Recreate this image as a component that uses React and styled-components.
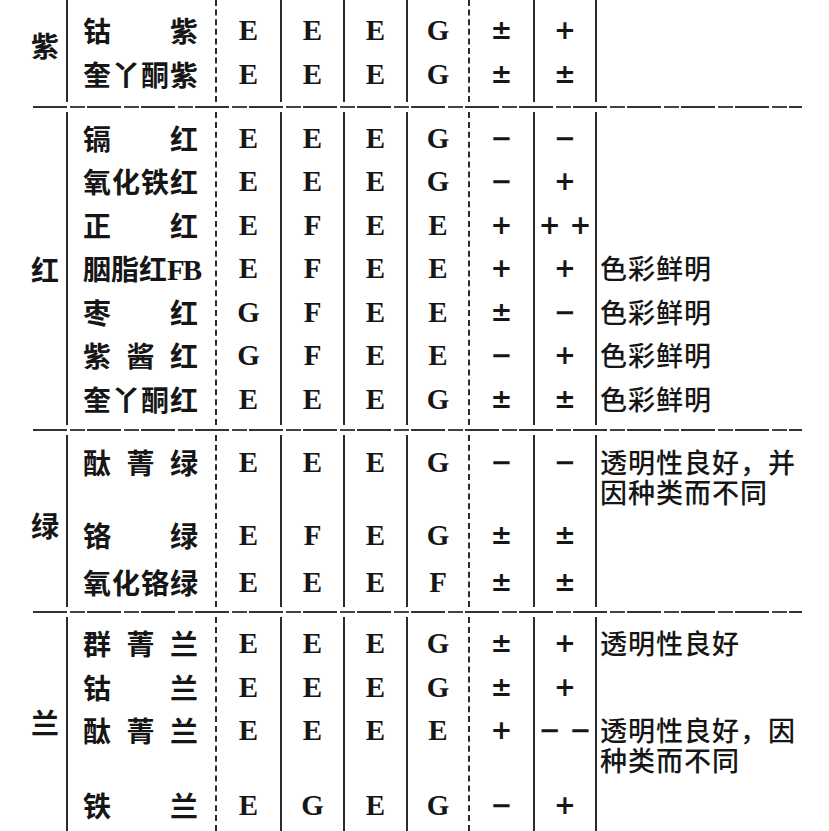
import React from 'react';
import styled, { createGlobalStyle } from 'styled-components';

const Global = createGlobalStyle`
  html, body { margin: 0; padding: 0; background: #fff; }
  body { width: 829px; height: 831px; overflow: hidden; }
`;

const Page = styled.div`
  width: 829px;
  display: flex;
  flex-direction: column;
  color: #161616;
  font-family: "Noto Sans CJK SC", "Noto Sans", sans-serif;
`;

const Group = styled.section`
  display: flex;
  align-items: stretch;
`;

const Label = styled.div`
  width: 66px;
  flex: none;
  box-sizing: border-box;
  padding-left: 31px;
  padding-top: ${p => p.$down || 0}px;
  padding-bottom: ${p => p.$up || 0}px;
  display: flex;
  align-items: center;
  font-size: 28px;
  font-weight: 700;
`;

const Column = styled.div`
  box-sizing: border-box;
  width: ${p => (p.$w ? `${p.$w}px` : 'auto')};
  flex: ${p => (p.$w ? 'none' : '1 1 auto')};
  border-left: 2px ${p => (p.$dashed ? 'dashed' : 'solid')} #2b2b2b;
  margin-top: ${p => p.$mt}px;
  margin-bottom: ${p => p.$mb}px;
  padding-top: ${p => p.$pt}px;
  padding-bottom: ${p => p.$pb}px;
  display: flex;
  flex-direction: column;
`;

const NameCell = styled.div`
  height: ${p => p.$h}px;
  flex: none;
  display: flex;
  justify-content: space-between;
  align-items: flex-start;
  padding: 0 17px 0 15px;
  font-size: 28px;
  font-weight: 700;
  line-height: 44px;
  white-space: nowrap;
`;

const Latin = styled.span`
  font-family: "Liberation Serif", serif;
  font-weight: 700;
  font-size: 29px;
  letter-spacing: -2px;
`;

const DataCell = styled.div`
  height: ${p => p.$h}px;
  flex: none;
  display: flex;
  justify-content: center;
  align-items: flex-start;
  font-family: ${p => (p.$sym ? '"DejaVu Sans", sans-serif' : '"Liberation Serif", serif')};
  font-weight: 700;
  font-size: ${p => (p.$sym ? 26 : 29)}px;
  line-height: 44px;
  white-space: pre;
`;

const NoteCell = styled.div`
  height: ${p => p.$h}px;
  flex: none;
  box-sizing: border-box;
  padding: 7px 0 0 3px;
  font-size: 27px;
  font-weight: 500;
  line-height: 30px;
  letter-spacing: 1px;
  white-space: nowrap;
`;

const Separator = styled.div`
  height: 2px;
  margin-left: 33px;
  width: 769px;
  background: repeating-linear-gradient(90deg, #333 0 34px, transparent 34px 37px, #444 37px 52px, transparent 52px 54px);
`;

const DATA_COLS = [
  { w: 65, dashed: true },
  { w: 63 },
  { w: 63 },
  { w: 62 },
  { w: 65, dashed: true },
  { w: 62 },
];

const GROUPS = [
  {
    label: '紫', up: 16, down: 0,
    mt: 0, pt: 8, pb: 7, mb: 4,
    rows: [
      { name: ['钴', '紫'], v: ['E', 'E', 'E', 'G', '±', '+'], h: 43.5 },
      { name: ['奎', '丫', '酮', '紫'], v: ['E', 'E', 'E', 'G', '±', '±'], h: 43.5 },
    ],
  },
  {
    label: '红', up: 0, down: 0,
    mt: 4, pt: 3.5, pb: 5, mb: 4,
    rows: [
      { name: ['镉', '红'], v: ['E', 'E', 'E', 'G', '−', '−'], h: 43.5 },
      { name: ['氧', '化', '铁', '红'], v: ['E', 'E', 'E', 'G', '−', '+'], h: 43.5 },
      { name: ['正', '红'], v: ['E', 'F', 'E', 'E', '+', '+ +'], h: 43.5 },
      { fb: true, v: ['E', 'F', 'E', 'E', '+', '+'], note: ['色彩鲜明'], h: 43.5 },
      { name: ['枣', '红'], v: ['G', 'F', 'E', 'E', '±', '−'], note: ['色彩鲜明'], h: 43.5 },
      { name: ['紫', '酱', '红'], v: ['G', 'F', 'E', 'E', '−', '+'], note: ['色彩鲜明'], h: 43.5 },
      { name: ['奎', '丫', '酮', '红'], v: ['E', 'E', 'E', 'G', '±', '±'], note: ['色彩鲜明'], h: 43.5 },
    ],
  },
  {
    label: '绿', up: 0, down: 8,
    mt: 4, pt: 5, pb: 3, mb: 4,
    rows: [
      { name: ['酞', '菁', '绿'], v: ['E', 'E', 'E', 'G', '−', '−'], note: ['透明性良好，并', '因种类而不同'], h: 73 },
      { name: ['铬', '绿'], v: ['E', 'F', 'E', 'G', '±', '±'], h: 47 },
      { name: ['氧', '化', '铬', '绿'], v: ['E', 'E', 'E', 'F', '±', '±'], h: 44 },
    ],
  },
  {
    label: '兰', up: 0, down: 0,
    mt: 4, pt: 4, pb: 4, mb: 0,
    rows: [
      { name: ['群', '菁', '兰'], v: ['E', 'E', 'E', 'G', '±', '+'], note: ['透明性良好'], h: 44 },
      { name: ['钴', '兰'], v: ['E', 'E', 'E', 'G', '±', '+'], h: 43 },
      { name: ['酞', '菁', '兰'], v: ['E', 'E', 'E', 'E', '+', '− −'], note: ['透明性良好，因', '种类而不同'], h: 75 },
      { name: ['铁', '兰'], v: ['E', 'G', 'E', 'G', '−', '+'], h: 44 },
    ],
  },
];

const isSym = s => !/^[EFG]$/.test(s);

function GroupBlock({ g }) {
  const box = { $mt: g.mt, $pt: g.pt, $pb: g.pb, $mb: g.mb };
  return (
    <Group>
      <Label $up={g.up} $down={g.down}>{g.label}</Label>
      <Column $w={149} {...box}>
        {g.rows.map((r, i) => (
          <NameCell key={i} $h={r.h}>
            {r.fb ? (
              <span>胭脂红<Latin>FB</Latin></span>
            ) : (
              r.name.map((c, j) => <span key={j}>{c}</span>)
            )}
          </NameCell>
        ))}
      </Column>
      {DATA_COLS.map((c, ci) => (
        <Column key={ci} $w={c.w} $dashed={c.dashed} {...box}>
          {g.rows.map((r, i) => (
            <DataCell key={i} $h={r.h} $sym={isSym(r.v[ci])}>{r.v[ci]}</DataCell>
          ))}
        </Column>
      ))}
      <Column {...box}>
        {g.rows.map((r, i) => (
          <NoteCell key={i} $h={r.h}>
            {(r.note || []).map((l, j) => <div key={j}>{l}</div>)}
          </NoteCell>
        ))}
      </Column>
    </Group>
  );
}

export default function App() {
  return (
    <>
      <Global />
      <Page>
        {GROUPS.map((g, i) => (
          <React.Fragment key={g.label}>
            {i > 0 && <Separator />}
            <GroupBlock g={g} />
          </React.Fragment>
        ))}
      </Page>
    </>
  );
}
